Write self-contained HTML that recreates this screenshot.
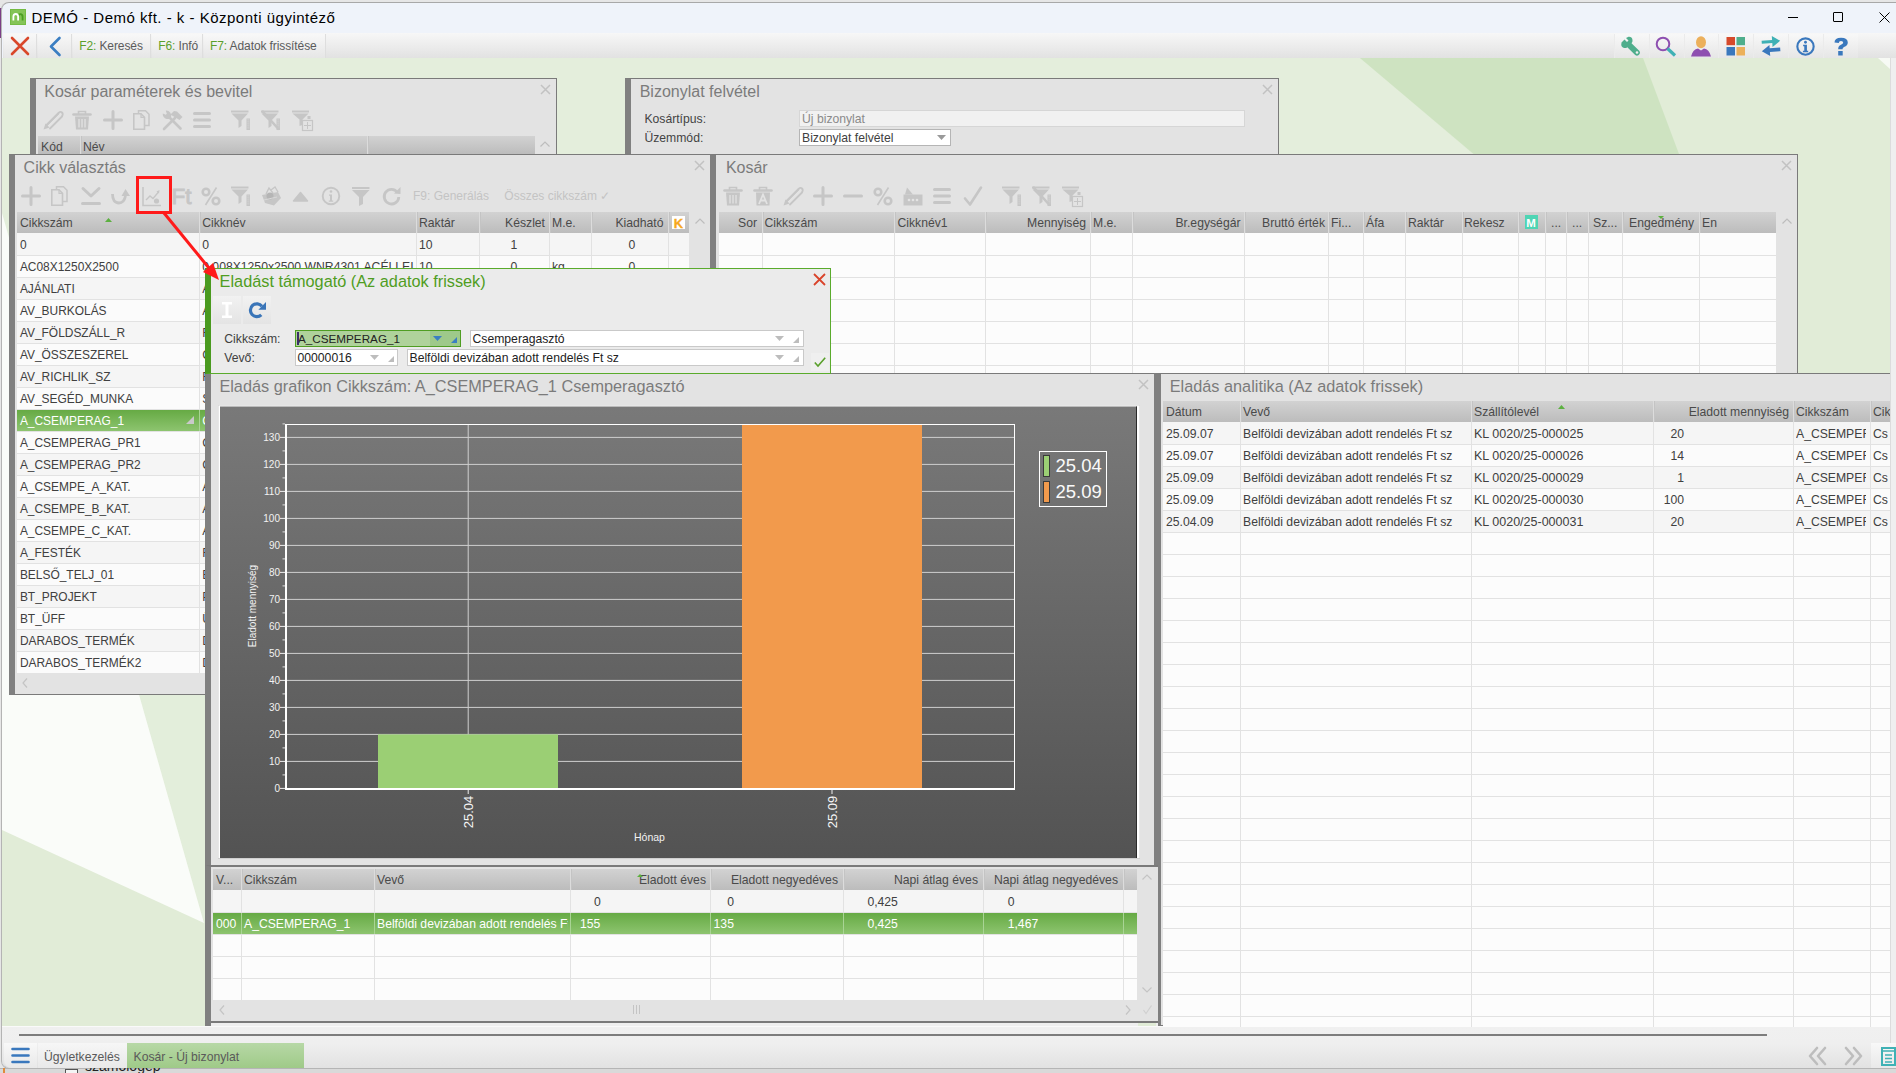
<!DOCTYPE html><html><head><meta charset='utf-8'><style>
*{margin:0;padding:0}
html,body{width:1896px;height:1073px;overflow:hidden;background:#c9c9c9;font-family:"Liberation Sans",sans-serif}
div{position:absolute;box-sizing:border-box}
.t{white-space:nowrap}
svg{position:absolute;overflow:visible}
</style></head><body><div style="left:0px;top:0px;width:1896px;height:1073px;background:#e6e6e6"></div>
<div style="left:0px;top:1068px;width:1896px;height:5px;background:#c3c3c3"></div>
<div style="left:0px;top:8px;width:2px;height:30px;background:#7b3f86"></div>
<div style="left:1px;top:2px;width:1895px;height:1067px;background:#eff3fa;border-top:1px solid #a8a8a8;border-left:1px solid #b4b4b4;border-bottom:1px solid #b0b0b0;border-radius:8px 0 0 8px"></div>
<div style="left:10px;top:9px;width:16px;height:16px;background:#84c458;border:0.5px solid #74bb44"></div>
<svg style="left:10px;top:9px" width="16" height="16"><path d="M8.1 7.8Q8.1 5.2 10.35 5.2Q12.6 5.2 12.6 7.8V11.5" fill="none" stroke="#4b9e22" stroke-width="1.8"/><path d="M3.4 11.5V7.6Q3.4 5 5.75 5Q8.1 5 8.1 7.6V11.5" fill="none" stroke="#fff" stroke-width="1.8"/></svg>
<div class="t" style="top:3px;font-size:15px;line-height:30px;color:#000;left:31.5px;letter-spacing:0.5px">DEMÓ - Demó kft. - k - Központi ügyintéző</div>
<div style="left:1788px;top:17px;width:10px;height:1px;background:#000"></div>
<div style="left:1833px;top:12px;width:10px;height:10px;border:1px solid #000;border-radius:1px"></div>
<svg style="left:1879px;top:12px" width="11" height="11"><path d="M0.5 0.5L10.5 10.5M10.5 0.5L0.5 10.5" stroke="#000" stroke-width="1"/></svg>
<div style="left:3px;top:33px;width:1893px;height:26px;background:linear-gradient(#f7f7f7,#e1e1e1)"></div>
<div style="left:4px;top:34px;width:33px;height:24px;background:linear-gradient(#f8f8f8,#e6e6e6);border-right:1px solid #dedede"></div>
<div style="left:38px;top:34px;width:34px;height:24px;background:linear-gradient(#f8f8f8,#e6e6e6);border-right:1px solid #dedede"></div>
<div style="left:73px;top:34px;width:78px;height:24px;background:linear-gradient(#f8f8f8,#e6e6e6);border-right:1px solid #dedede"></div>
<div style="left:152px;top:34px;width:51px;height:24px;background:linear-gradient(#f8f8f8,#e6e6e6);border-right:1px solid #dedede"></div>
<div style="left:204px;top:34px;width:122px;height:24px;background:linear-gradient(#f8f8f8,#e6e6e6);border-right:1px solid #dedede"></div>
<div style="left:1614px;top:34px;width:35px;height:24px;background:linear-gradient(#f8f8f8,#e6e6e6);border-left:1px solid #ebebeb"></div>
<div style="left:1649px;top:34px;width:35px;height:24px;background:linear-gradient(#f8f8f8,#e6e6e6);border-left:1px solid #ebebeb"></div>
<div style="left:1684px;top:34px;width:35px;height:24px;background:linear-gradient(#f8f8f8,#e6e6e6);border-left:1px solid #ebebeb"></div>
<div style="left:1718px;top:34px;width:35px;height:24px;background:linear-gradient(#f8f8f8,#e6e6e6);border-left:1px solid #ebebeb"></div>
<div style="left:1753px;top:34px;width:35px;height:24px;background:linear-gradient(#f8f8f8,#e6e6e6);border-left:1px solid #ebebeb"></div>
<div style="left:1788px;top:34px;width:35px;height:24px;background:linear-gradient(#f8f8f8,#e6e6e6);border-left:1px solid #ebebeb"></div>
<div style="left:1823px;top:34px;width:35px;height:24px;background:linear-gradient(#f8f8f8,#e6e6e6);border-left:1px solid #ebebeb"></div>
<svg style="left:10px;top:36px" width="20" height="20" viewBox="0 0 20 20"><path d="M2 2L18 18M18 2L2 18" stroke="#d9472b" stroke-width="2.6" stroke-linecap="round"/></svg>
<svg style="left:48px;top:36px" width="14" height="20" viewBox="0 0 14 20"><path d="M11.5 2L3 10.5L11.5 19" fill="none" stroke="#3a7ec2" stroke-width="2.6" stroke-linecap="round" stroke-linejoin="round"/></svg>
<div class="t" style="top:34px;font-size:12px;line-height:24px;color:#5b5b5b;left:79.2px;letter-spacing:-0.1px"><span style="color:#5aa02c">F2:</span> Keresés</div>
<div class="t" style="top:34px;font-size:12px;line-height:24px;color:#5b5b5b;left:158.2px;letter-spacing:-0.1px"><span style="color:#5aa02c">F6:</span> Infó</div>
<div class="t" style="top:34px;font-size:12px;line-height:24px;color:#5b5b5b;left:210px;letter-spacing:-0.1px"><span style="color:#5aa02c">F7:</span> Adatok frissítése</div>
<svg style="left:1620px;top:36px" width="21" height="20" viewBox="0 0 21 20"><path d="M1.5 6.5L4.5 3.5L7 6L8.5 4.5L6 2L8.5 0.8Q12 0.5 12.5 4Q12.8 6 11.5 7.2L19.5 15Q20.8 17 19 18.8Q17 20.5 15.2 19L7.3 11.2Q6 12.3 4 12Q0.5 11 1.5 6.5Z" fill="#4fae8c"/><circle cx="17" cy="16.5" r="1.3" fill="#f0f0f0"/></svg>
<svg style="left:1655px;top:36px" width="22" height="20" viewBox="0 0 22 20"><circle cx="8" cy="8" r="6.3" fill="none" stroke="#8e4fb0" stroke-width="2"/><path d="M12.5 12.5L20 19.5" stroke="#3fb1b5" stroke-width="3.2"/></svg>
<svg style="left:1690px;top:36px" width="22" height="21" viewBox="0 0 22 21"><ellipse cx="11" cy="6.2" rx="5" ry="6" fill="#ecb05b"/><path d="M1 20.5Q3 13 8 12.5L11 14.5L14 12.5Q19 13 21 20.5Z" fill="#8e4fb0"/></svg>
<svg style="left:1726px;top:36px" width="20" height="20" viewBox="0 0 20 20"><rect x="0.5" y="1" width="8.5" height="8.2" fill="#d64a2b"/><rect x="10.5" y="1" width="8.5" height="8.2" fill="#4fae8c"/><rect x="0.5" y="11" width="8.5" height="8.5" fill="#3a78bd"/><rect x="10.5" y="11" width="8.5" height="8.5" fill="#ecb05b"/></svg>
<svg style="left:1760px;top:35px" width="22" height="22" viewBox="0 0 22 22"><g transform="rotate(-4 11 11)"><path d="M2 5H12.5V1L20.5 6.5L12.5 12V8.2H2Z" fill="#3fb1b5"/><path d="M20 13.2H9.5V10L1.5 15.5L9.5 21V16.8H20Z" fill="#3a78bd"/></g></svg>
<svg style="left:1796px;top:37px" width="19" height="19" viewBox="0 0 20 20"><circle cx="10" cy="10" r="8.6" fill="none" stroke="#3a78bd" stroke-width="2.2"/><circle cx="10" cy="5.5" r="1.5" fill="#3a78bd"/><path d="M7.5 8.2H11.5V14.5H12.8V16H7.3V14.5H8.7V9.8H7.5Z" fill="#3a78bd"/></svg>
<svg style="left:1833px;top:37px" width="16" height="19" viewBox="0 0 16 19"><path d="M1.5 5.5Q1.5 0.8 8 0.8Q14.8 0.8 14.8 5.5Q14.8 8.5 11 10Q9.5 10.8 9.5 12.2H5.2Q5 9.3 8 7.8Q10.2 6.8 10.2 5.5Q10.2 4 8 4Q5.8 4 5.8 6Z" fill="#3a78bd"/><rect x="5.2" y="14" width="4.5" height="4.5" fill="#3a78bd"/></svg>
<svg style="left:2px;top:58px" width="1888" height="968" viewBox="2 58 1888 968">
<rect x="2" y="58" width="1888" height="968" fill="#e1ecd7"/>
<polygon points="2,58 1360,58 1480,160 1480,373 2,373" fill="#e4eedc"/>
<polygon points="1360,58 1643,58 1700,210 1540,210" fill="#cee3c1"/>
<polygon points="1878,58 1890,58 1890,69" fill="#f7faf5"/>
<polygon points="2,213 40,213 205,700 205,923 204,923" fill="#e3eedb"/>
<polygon points="2,213 204,923 2,830" fill="#fafcf9"/>
</svg>
<div style="left:1890px;top:58px;width:6px;height:1010px;background:#efefef;border-left:1px solid #dcdcdc"></div>
<div style="left:2px;top:1026px;width:1888px;height:43px;background:linear-gradient(#f0f0f0 0%,#efefef 40%,#e2e2e2 100%);border-top:1px solid #fafafa;border-bottom:1px solid #c6c6c6;border-radius:0 0 0 9px"></div>
<div style="left:1890px;top:1026px;width:6px;height:42px;background:#efefef"></div>
<div style="left:19px;top:1034px;width:1748px;height:2px;background:#7d7d7d"></div>
<div style="left:30px;top:78px;width:527px;height:80px;background:#e3e3e3;border:1px solid #7a7a7a;border-left:6px solid #808080"></div>
<div class="t" style="top:76px;font-size:16px;line-height:32px;color:#7b7b7b;left:44.3px;">Kosár paraméterek és bevitel</div>
<svg style="left:541px;top:85px" width="9" height="9"><path d="M0 0L9 9M9 0L0 9" stroke="#c2c2c2" stroke-width="1.5"/></svg>
<div style="left:38px;top:136px;width:497px;height:18px;background:linear-gradient(#d2d2d2,#bcbcbc)"></div>
<div style="left:80px;top:136px;width:1px;height:18px;background:#dcdcdc;border-right:1px solid #c4c4c4;width:2px"></div>
<div style="left:367px;top:136px;width:1px;height:18px;background:#dcdcdc;border-right:1px solid #c4c4c4;width:2px"></div>
<div class="t" style="top:134px;font-size:12.2px;line-height:26px;color:#4a4a4a;left:41px;">Kód</div>
<div class="t" style="top:134px;font-size:12.2px;line-height:26px;color:#4a4a4a;left:83px;">Név</div>
<svg style="left:540px;top:141px" width="10" height="6"><path d="M0.5 5.5L5 1L9.5 5.5" fill="none" stroke="#bdbdbd" stroke-width="1.2"/></svg>
<svg style="left:43px;top:110px" width="20" height="20" viewBox="0 0 20 20"><path d="M3.5 15L15.5 3M7 18.5L19 6.5" stroke="#c6c6c6" stroke-width="1.8" stroke-linecap="round"/><path d="M15.5 3Q17.5 1 19 2.5Q20.5 4 19 6.5" fill="none" stroke="#c6c6c6" stroke-width="1.8"/><path d="M0.5 19.5L2.5 13.5L6.5 17.5Z" fill="#c6c6c6"/><path d="M4 16L16 4" stroke="#c6c6c6" stroke-width="0.8"/></svg>
<svg style="left:72px;top:110px" width="20" height="20" viewBox="0 0 20 20"><path d="M1.5 4.5H18.5" stroke="#c6c6c6" stroke-width="2.6" stroke-linecap="round"/><path d="M6.5 4V1.5H13.5V4" fill="none" stroke="#c6c6c6" stroke-width="1.6"/><path d="M3 6.5H17L16 19.5H4Z" fill="#c6c6c6"/><path d="M7 9V17.5M10 9V17.5M13 9V17.5" stroke="#e3e3e3" stroke-width="1.3"/></svg>
<svg style="left:103px;top:110px" width="20" height="20" viewBox="0 0 20 20"><path d="M10 1.5V18.5M1.5 10H18.5" stroke="#c6c6c6" stroke-width="3" stroke-linecap="round"/></svg>
<svg style="left:133px;top:110px" width="20" height="20" viewBox="0 0 20 20"><path d="M5.5 3V0.8H12.5L16 4.3V15.5H11.5" fill="none" stroke="#c6c6c6" stroke-width="1.5"/><path d="M0.8 3.8H8L11.5 7.3V19.2H0.8Z" fill="none" stroke="#c6c6c6" stroke-width="1.6"/><path d="M8 3.8V7.3H11.5" fill="none" stroke="#c6c6c6" stroke-width="1.2"/></svg>
<svg style="left:162px;top:110px" width="20" height="20" viewBox="0 0 20 20"><path d="M6 6L18.5 18.5" stroke="#c6c6c6" stroke-width="2.6" stroke-linecap="round"/><path d="M0.8 3.5A5 5 0 0 0 7.5 8.8L9 7.2A5 5 0 0 0 3.8 0.6L4.8 3.8L3.8 4.8Z" fill="#c6c6c6"/><path d="M2 19L13 8" stroke="#c6c6c6" stroke-width="2.6" stroke-linecap="round"/><path d="M8.5 4.5L12 1L15 1.5L20.5 7L17.5 10Z" fill="#c6c6c6"/></svg>
<svg style="left:193px;top:110px" width="20" height="20" viewBox="0 0 20 20"><path d="M1.5 3.5H16.5M1.5 10H16.5M1.5 16.5H16.5" stroke="#c6c6c6" stroke-width="3" stroke-linecap="round"/></svg>
<svg style="left:231px;top:110px" width="20" height="20" viewBox="0 0 20 20"><path d="M0 0.5H17.5V2.5H0Z" fill="#c6c6c6"/><path d="M0.5 3.5H17L10.5 10.5V16L7.5 18V10.5Z" fill="#c6c6c6"/><rect x="15.5" y="8.5" width="3.5" height="11.5" fill="#c6c6c6"/><rect x="16.2" y="9.5" width="2.2" height="0.8" fill="#e3e3e3" opacity="0.6"/><rect x="16.2" y="11.5" width="2.2" height="0.8" fill="#e3e3e3" opacity="0.6"/><rect x="16.2" y="13.5" width="2.2" height="0.8" fill="#e3e3e3" opacity="0.6"/><rect x="16.2" y="15.5" width="2.2" height="0.8" fill="#e3e3e3" opacity="0.6"/><rect x="16.2" y="17.5" width="2.2" height="0.8" fill="#e3e3e3" opacity="0.6"/></svg>
<svg style="left:261px;top:110px" width="20" height="20" viewBox="0 0 20 20"><path d="M0 0.5H17.5V2.5H0Z" fill="#c6c6c6"/><path d="M0.5 3.5H17L10.5 10.5V16L7.5 18V10.5Z" fill="#c6c6c6"/><rect x="15.5" y="8.5" width="3.5" height="11.5" fill="#c6c6c6"/><rect x="16.2" y="9.5" width="2.2" height="0.8" fill="#e3e3e3" opacity="0.6"/><rect x="16.2" y="11.5" width="2.2" height="0.8" fill="#e3e3e3" opacity="0.6"/><rect x="16.2" y="13.5" width="2.2" height="0.8" fill="#e3e3e3" opacity="0.6"/><rect x="16.2" y="15.5" width="2.2" height="0.8" fill="#e3e3e3" opacity="0.6"/><rect x="16.2" y="17.5" width="2.2" height="0.8" fill="#e3e3e3" opacity="0.6"/><path d="M1 0.8L18 19.5" stroke="#c6c6c6" stroke-width="2.6"/></svg>
<svg style="left:292px;top:110px" width="20" height="20" viewBox="0 0 20 20"><path d="M0 0.5H17V2.5H0Z" fill="#c6c6c6"/><path d="M0.5 3.5H16.5L10.5 9.5V15L7.5 16V9.5Z" fill="#c6c6c6"/><rect x="10.5" y="10.5" width="10" height="10" fill="#e3e3e3" stroke="#c6c6c6" stroke-width="1.2"/><path d="M15.5 12V19M12 15.5H19" stroke="#c6c6c6" stroke-width="1"/><rect x="15.5" y="6" width="3" height="3" fill="#c6c6c6"/></svg>
<div style="left:625px;top:78px;width:654px;height:80px;background:#e3e3e3;border:1px solid #7a7a7a;border-left:6px solid #808080"></div>
<div class="t" style="top:76px;font-size:16px;line-height:32px;color:#7b7b7b;left:639.7px;">Bizonylat felvétel</div>
<svg style="left:1263px;top:85px" width="9" height="9"><path d="M0 0L9 9M9 0L0 9" stroke="#c2c2c2" stroke-width="1.5"/></svg>
<div class="t" style="top:106px;font-size:12.2px;line-height:26px;color:#444;left:644.4px;">Kosártípus:</div>
<div class="t" style="top:125px;font-size:12.2px;line-height:26px;color:#444;left:644.4px;">Üzemmód:</div>
<div style="left:799px;top:110px;width:446px;height:17px;background:#f1f1f1;border:1px solid #d6d6d6"></div>
<div class="t" style="top:106px;font-size:12.2px;line-height:26px;color:#8a8a8a;left:802px;">Új bizonylat</div>
<div style="left:799px;top:129px;width:152px;height:17px;background:#fff;border:1px solid #b5b5b5"></div>
<div class="t" style="top:125px;font-size:12.2px;line-height:26px;color:#404040;left:802px;">Bizonylat felvétel</div>
<svg style="left:937px;top:135px" width="9" height="5"><path d="M0 0H9L4.5 5Z" fill="#9a9a9a"/></svg>
<div style="left:9px;top:154px;width:702px;height:541px;background:#e3e3e3;border:1px solid #7a7a7a;border-left:6px solid #808080"></div>
<div class="t" style="top:152px;font-size:16px;line-height:32px;color:#7b7b7b;left:23.6px;">Cikk választás</div>
<svg style="left:695px;top:161px" width="9" height="9"><path d="M0 0L9 9M9 0L0 9" stroke="#c2c2c2" stroke-width="1.5"/></svg>
<div style="left:17px;top:212px;width:672px;height:21px;background:linear-gradient(#d2d2d2,#bcbcbc)"></div>
<div style="left:199px;top:212px;width:1px;height:21px;background:#dcdcdc;border-right:1px solid #c4c4c4;width:2px"></div>
<div style="left:416px;top:212px;width:1px;height:21px;background:#dcdcdc;border-right:1px solid #c4c4c4;width:2px"></div>
<div style="left:479px;top:212px;width:1px;height:21px;background:#dcdcdc;border-right:1px solid #c4c4c4;width:2px"></div>
<div style="left:549px;top:212px;width:1px;height:21px;background:#dcdcdc;border-right:1px solid #c4c4c4;width:2px"></div>
<div style="left:591px;top:212px;width:1px;height:21px;background:#dcdcdc;border-right:1px solid #c4c4c4;width:2px"></div>
<div style="left:668px;top:212px;width:1px;height:21px;background:#dcdcdc;border-right:1px solid #c4c4c4;width:2px"></div>
<div class="t" style="top:210px;font-size:12.2px;line-height:26px;color:#4a4a4a;left:19.9px;">Cikkszám</div>
<div class="t" style="top:210px;font-size:12.2px;line-height:26px;color:#4a4a4a;left:202.2px;">Cikknév</div>
<div class="t" style="top:210px;font-size:12.2px;line-height:26px;color:#4a4a4a;left:419px;">Raktár</div>
<div class="t" style="top:210px;font-size:12.2px;line-height:26px;color:#4a4a4a;right:1351px;">Készlet</div>
<div class="t" style="top:210px;font-size:12.2px;line-height:26px;color:#4a4a4a;left:552px;">M.e.</div>
<div class="t" style="top:210px;font-size:12.2px;line-height:26px;color:#4a4a4a;right:1232.5px;">Kiadható</div>
<svg style="left:105px;top:218px" width="7" height="4"><path d="M0 4L3.5 0L7 4Z" fill="#5cb040"/></svg>
<div style="left:672px;top:216px;width:13px;height:13px;background:#fff"></div>
<div class="t" style="top:211px;font-size:13px;line-height:26px;color:#f7a820;left:673.7px;font-weight:bold;-webkit-text-stroke:0.3px #f7a820">K</div>
<div style="left:17px;top:233px;width:672px;height:440px;background:#fcfcfc"></div>
<div style="left:17px;top:233px;width:672px;height:22px;background:#f5f5f5"></div>
<div style="left:17px;top:255px;width:672px;height:22px;background:#fbfbfb"></div>
<div style="left:17px;top:277px;width:672px;height:22px;background:#f5f5f5"></div>
<div style="left:17px;top:299px;width:672px;height:22px;background:#fbfbfb"></div>
<div style="left:17px;top:321px;width:672px;height:22px;background:#f5f5f5"></div>
<div style="left:17px;top:343px;width:672px;height:22px;background:#fbfbfb"></div>
<div style="left:17px;top:365px;width:672px;height:22px;background:#f5f5f5"></div>
<div style="left:17px;top:387px;width:672px;height:22px;background:#fbfbfb"></div>
<div style="left:17px;top:409px;width:672px;height:22px;background:#f5f5f5"></div>
<div style="left:17px;top:431px;width:672px;height:22px;background:#fbfbfb"></div>
<div style="left:17px;top:453px;width:672px;height:22px;background:#f5f5f5"></div>
<div style="left:17px;top:475px;width:672px;height:22px;background:#fbfbfb"></div>
<div style="left:17px;top:497px;width:672px;height:22px;background:#f5f5f5"></div>
<div style="left:17px;top:519px;width:672px;height:22px;background:#fbfbfb"></div>
<div style="left:17px;top:541px;width:672px;height:22px;background:#f5f5f5"></div>
<div style="left:17px;top:563px;width:672px;height:22px;background:#fbfbfb"></div>
<div style="left:17px;top:585px;width:672px;height:22px;background:#f5f5f5"></div>
<div style="left:17px;top:607px;width:672px;height:22px;background:#fbfbfb"></div>
<div style="left:17px;top:629px;width:672px;height:22px;background:#f5f5f5"></div>
<div style="left:17px;top:651px;width:672px;height:22px;background:#fbfbfb"></div>
<div style="left:17px;top:255px;width:672px;height:1px;background:#e2e2e2"></div>
<div style="left:17px;top:277px;width:672px;height:1px;background:#e2e2e2"></div>
<div style="left:17px;top:299px;width:672px;height:1px;background:#e2e2e2"></div>
<div style="left:17px;top:321px;width:672px;height:1px;background:#e2e2e2"></div>
<div style="left:17px;top:343px;width:672px;height:1px;background:#e2e2e2"></div>
<div style="left:17px;top:365px;width:672px;height:1px;background:#e2e2e2"></div>
<div style="left:17px;top:387px;width:672px;height:1px;background:#e2e2e2"></div>
<div style="left:17px;top:409px;width:672px;height:1px;background:#e2e2e2"></div>
<div style="left:17px;top:431px;width:672px;height:1px;background:#e2e2e2"></div>
<div style="left:17px;top:453px;width:672px;height:1px;background:#e2e2e2"></div>
<div style="left:17px;top:475px;width:672px;height:1px;background:#e2e2e2"></div>
<div style="left:17px;top:497px;width:672px;height:1px;background:#e2e2e2"></div>
<div style="left:17px;top:519px;width:672px;height:1px;background:#e2e2e2"></div>
<div style="left:17px;top:541px;width:672px;height:1px;background:#e2e2e2"></div>
<div style="left:17px;top:563px;width:672px;height:1px;background:#e2e2e2"></div>
<div style="left:17px;top:585px;width:672px;height:1px;background:#e2e2e2"></div>
<div style="left:17px;top:607px;width:672px;height:1px;background:#e2e2e2"></div>
<div style="left:17px;top:629px;width:672px;height:1px;background:#e2e2e2"></div>
<div style="left:17px;top:651px;width:672px;height:1px;background:#e2e2e2"></div>
<div style="left:17px;top:673px;width:672px;height:1px;background:#e2e2e2"></div>
<div style="left:199px;top:233px;width:1px;height:440px;background:#e2e2e2"></div>
<div style="left:416px;top:233px;width:1px;height:440px;background:#e2e2e2"></div>
<div style="left:479px;top:233px;width:1px;height:440px;background:#e2e2e2"></div>
<div style="left:549px;top:233px;width:1px;height:440px;background:#e2e2e2"></div>
<div style="left:591px;top:233px;width:1px;height:440px;background:#e2e2e2"></div>
<div style="left:668px;top:233px;width:1px;height:440px;background:#e2e2e2"></div>
<div style="left:17px;top:410px;width:672px;height:21px;background:linear-gradient(#66aa44,#8dc46f)"></div>
<div style="left:199px;top:410px;width:1px;height:21px;background:#a9d495"></div>
<div style="left:416px;top:410px;width:1px;height:21px;background:#a9d495"></div>
<div style="left:479px;top:410px;width:1px;height:21px;background:#a9d495"></div>
<div style="left:549px;top:410px;width:1px;height:21px;background:#a9d495"></div>
<div style="left:591px;top:410px;width:1px;height:21px;background:#a9d495"></div>
<div style="left:668px;top:410px;width:1px;height:21px;background:#a9d495"></div>
<div class="t" style="top:233px;font-size:11.95px;line-height:24px;color:#404040;left:19.9px;">0</div>
<div class="t" style="top:232px;font-size:12.2px;line-height:26px;color:#404040;left:202.2px;">0</div>
<div class="t" style="top:232px;font-size:12.2px;line-height:26px;color:#404040;left:419px;">10</div>
<div class="t" style="top:232px;font-size:12.2px;line-height:26px;color:#404040;left:14px;width:1000px;text-align:center;">1</div>
<div class="t" style="top:232px;font-size:12.2px;line-height:26px;color:#404040;left:552px;"></div>
<div class="t" style="top:232px;font-size:12.2px;line-height:26px;color:#404040;left:132px;width:1000px;text-align:center;">0</div>
<div class="t" style="top:255px;font-size:11.95px;line-height:24px;color:#404040;left:19.9px;">AC08X1250X2500</div>
<div class="t" style="top:254px;font-size:12.2px;line-height:26px;color:#404040;left:202.2px;">0.008X1250x2500 WNR4301 ACÉLLEI</div>
<div class="t" style="top:254px;font-size:12.2px;line-height:26px;color:#404040;left:419px;">10</div>
<div class="t" style="top:254px;font-size:12.2px;line-height:26px;color:#404040;left:14px;width:1000px;text-align:center;">0</div>
<div class="t" style="top:254px;font-size:12.2px;line-height:26px;color:#404040;left:552px;">kg</div>
<div class="t" style="top:254px;font-size:12.2px;line-height:26px;color:#404040;left:132px;width:1000px;text-align:center;">0</div>
<div class="t" style="top:277px;font-size:11.95px;line-height:24px;color:#404040;left:19.9px;">AJÁNLATI</div>
<div class="t" style="top:276px;font-size:12.2px;line-height:26px;color:#404040;left:202.2px;">Ajánlati</div>
<div class="t" style="top:299px;font-size:11.95px;line-height:24px;color:#404040;left:19.9px;">AV_BURKOLÁS</div>
<div class="t" style="top:298px;font-size:12.2px;line-height:26px;color:#404040;left:202.2px;">Alap</div>
<div class="t" style="top:321px;font-size:11.95px;line-height:24px;color:#404040;left:19.9px;">AV_FÖLDSZÁLL_R</div>
<div class="t" style="top:320px;font-size:12.2px;line-height:26px;color:#404040;left:202.2px;">Földszállítás</div>
<div class="t" style="top:343px;font-size:11.95px;line-height:24px;color:#404040;left:19.9px;">AV_ÖSSZESZEREL</div>
<div class="t" style="top:342px;font-size:12.2px;line-height:26px;color:#404040;left:202.2px;">Csere</div>
<div class="t" style="top:365px;font-size:11.95px;line-height:24px;color:#404040;left:19.9px;">AV_RICHLIK_SZ</div>
<div class="t" style="top:364px;font-size:12.2px;line-height:26px;color:#404040;left:202.2px;">Richlik</div>
<div class="t" style="top:387px;font-size:11.95px;line-height:24px;color:#404040;left:19.9px;">AV_SEGÉD_MUNKA</div>
<div class="t" style="top:386px;font-size:12.2px;line-height:26px;color:#404040;left:202.2px;">Segéd</div>
<div class="t" style="top:409px;font-size:11.95px;line-height:24px;color:#fff;left:19.9px;">A_CSEMPERAG_1</div>
<div class="t" style="top:408px;font-size:12.2px;line-height:26px;color:#fff;left:202.2px;">Csemperagasztó</div>
<div class="t" style="top:431px;font-size:11.95px;line-height:24px;color:#404040;left:19.9px;">A_CSEMPERAG_PR1</div>
<div class="t" style="top:430px;font-size:12.2px;line-height:26px;color:#404040;left:202.2px;">Csemperagasztó</div>
<div class="t" style="top:453px;font-size:11.95px;line-height:24px;color:#404040;left:19.9px;">A_CSEMPERAG_PR2</div>
<div class="t" style="top:452px;font-size:12.2px;line-height:26px;color:#404040;left:202.2px;">Csemperagasztó</div>
<div class="t" style="top:475px;font-size:11.95px;line-height:24px;color:#404040;left:19.9px;">A_CSEMPE_A_KAT.</div>
<div class="t" style="top:474px;font-size:12.2px;line-height:26px;color:#404040;left:202.2px;">A kat</div>
<div class="t" style="top:497px;font-size:11.95px;line-height:24px;color:#404040;left:19.9px;">A_CSEMPE_B_KAT.</div>
<div class="t" style="top:496px;font-size:12.2px;line-height:26px;color:#404040;left:202.2px;">A kat</div>
<div class="t" style="top:519px;font-size:11.95px;line-height:24px;color:#404040;left:19.9px;">A_CSEMPE_C_KAT.</div>
<div class="t" style="top:518px;font-size:12.2px;line-height:26px;color:#404040;left:202.2px;">A kat</div>
<div class="t" style="top:541px;font-size:11.95px;line-height:24px;color:#404040;left:19.9px;">A_FESTÉK</div>
<div class="t" style="top:540px;font-size:12.2px;line-height:26px;color:#404040;left:202.2px;">Festék</div>
<div class="t" style="top:563px;font-size:11.95px;line-height:24px;color:#404040;left:19.9px;">BELSŐ_TELJ_01</div>
<div class="t" style="top:562px;font-size:12.2px;line-height:26px;color:#404040;left:202.2px;">Belső</div>
<div class="t" style="top:585px;font-size:11.95px;line-height:24px;color:#404040;left:19.9px;">BT_PROJEKT</div>
<div class="t" style="top:584px;font-size:12.2px;line-height:26px;color:#404040;left:202.2px;">Projekt</div>
<div class="t" style="top:607px;font-size:11.95px;line-height:24px;color:#404040;left:19.9px;">BT_ÜFF</div>
<div class="t" style="top:606px;font-size:12.2px;line-height:26px;color:#404040;left:202.2px;">Üff</div>
<div class="t" style="top:629px;font-size:11.95px;line-height:24px;color:#404040;left:19.9px;">DARABOS_TERMÉK</div>
<div class="t" style="top:628px;font-size:12.2px;line-height:26px;color:#404040;left:202.2px;">Darabos</div>
<div class="t" style="top:651px;font-size:11.95px;line-height:24px;color:#404040;left:19.9px;">DARABOS_TERMÉK2</div>
<div class="t" style="top:650px;font-size:12.2px;line-height:26px;color:#404040;left:202.2px;">Darabos</div>
<svg style="left:186px;top:416px" width="8" height="8"><path d="M0 8L8 0V8Z" fill="#c9c9c9"/></svg>
<svg style="left:695px;top:218px" width="10" height="6"><path d="M0.5 5.5L5 1L9.5 5.5" fill="none" stroke="#bdbdbd" stroke-width="1.2"/></svg>
<div style="left:15px;top:673px;width:695px;height:21px;background:#e3e3e3"></div>
<svg style="left:22px;top:678px" width="6" height="10"><path d="M5 0.5L1 5L5 9.5" fill="none" stroke="#c4c4c4" stroke-width="1.2"/></svg>
<svg style="left:21px;top:186px" width="20" height="20" viewBox="0 0 20 20"><path d="M10 1.5V18.5M1.5 10H18.5" stroke="#c6c6c6" stroke-width="3" stroke-linecap="round"/></svg>
<svg style="left:51px;top:186px" width="20" height="20" viewBox="0 0 20 20"><path d="M5.5 3V0.8H12.5L16 4.3V15.5H11.5" fill="none" stroke="#c6c6c6" stroke-width="1.5"/><path d="M0.8 3.8H8L11.5 7.3V19.2H0.8Z" fill="none" stroke="#c6c6c6" stroke-width="1.6"/><path d="M8 3.8V7.3H11.5" fill="none" stroke="#c6c6c6" stroke-width="1.2"/></svg>
<svg style="left:81px;top:186px" width="20" height="20" viewBox="0 0 20 20"><path d="M2 2.5L10 10L18 2.5" fill="none" stroke="#c6c6c6" stroke-width="3" stroke-linecap="round" stroke-linejoin="round"/><path d="M1.5 17.5H18.5" stroke="#c6c6c6" stroke-width="3" stroke-linecap="round"/></svg>
<svg style="left:111px;top:186px" width="20" height="20" viewBox="0 0 20 20"><path d="M1.5 8Q1.5 17 8 17Q13 17 14.5 10" fill="none" stroke="#c6c6c6" stroke-width="2.8"/><path d="M10.5 10H19L14.5 3Z" fill="#c6c6c6"/></svg>
<svg style="left:142px;top:186px" width="20" height="20" viewBox="0 0 20 20"><path d="M1 1V19.5H19" fill="none" stroke="#c6c6c6" stroke-width="1.6"/><path d="M4 14L8 10L11 12.5L16.5 6" fill="none" stroke="#c6c6c6" stroke-width="1.3"/><path d="M14.5 5.5L17.5 4L17 7.5Z" fill="#c6c6c6"/><circle cx="14.5" cy="15" r="2.6" fill="#c6c6c6"/></svg>
<svg style="left:172px;top:186px" width="20" height="20" viewBox="0 0 20 20"><text x="-0.5" y="18" font-family="Liberation Sans" font-size="22" fill="#c6c6c6" stroke="#c6c6c6" stroke-width="0.9" textLength="20" lengthAdjust="spacingAndGlyphs">Ft</text></svg>
<svg style="left:201px;top:186px" width="20" height="20" viewBox="0 0 20 20"><circle cx="5" cy="6" r="3.3" fill="none" stroke="#c6c6c6" stroke-width="2.6"/><circle cx="15" cy="15" r="3.3" fill="none" stroke="#c6c6c6" stroke-width="2.6"/><path d="M15.5 1.5L4.5 19" stroke="#c6c6c6" stroke-width="1.6"/></svg>
<svg style="left:231px;top:186px" width="20" height="20" viewBox="0 0 20 20"><path d="M0 0.5H17.5V2.5H0Z" fill="#c6c6c6"/><path d="M0.5 3.5H17L10.5 10.5V16L7.5 18V10.5Z" fill="#c6c6c6"/><rect x="15.5" y="8.5" width="3.5" height="11.5" fill="#c6c6c6"/><rect x="16.2" y="9.5" width="2.2" height="0.8" fill="#e3e3e3" opacity="0.6"/><rect x="16.2" y="11.5" width="2.2" height="0.8" fill="#e3e3e3" opacity="0.6"/><rect x="16.2" y="13.5" width="2.2" height="0.8" fill="#e3e3e3" opacity="0.6"/><rect x="16.2" y="15.5" width="2.2" height="0.8" fill="#e3e3e3" opacity="0.6"/><rect x="16.2" y="17.5" width="2.2" height="0.8" fill="#e3e3e3" opacity="0.6"/></svg>
<svg style="left:261px;top:186px" width="20" height="20" viewBox="0 0 20 20"><path d="M1 9L17 6L20 12L13 19.5L4 17Z" fill="#c6c6c6"/><path d="M5 8L8 2L12 7M10 4L14 1L17 6" fill="none" stroke="#c6c6c6" stroke-width="1.4"/><circle cx="9" cy="10" r="3.5" fill="#b5b5b5"/><path d="M3 14L16 11" stroke="#d8d8d8" stroke-width="1"/></svg>
<svg style="left:292px;top:186px" width="20" height="20" viewBox="0 0 20 20"><path d="M1.5 15L8.5 6.5L15.5 15Z" fill="#c6c6c6" stroke="#c6c6c6" stroke-width="1.5" stroke-linejoin="round"/></svg>
<svg style="left:321px;top:186px" width="20" height="20" viewBox="0 0 20 20"><circle cx="10" cy="10" r="8.3" fill="none" stroke="#c6c6c6" stroke-width="1.9"/><circle cx="10" cy="5.5" r="1.3" fill="#c6c6c6"/><path d="M8 8.5H11V14.5H12.2V15.8H7.8V14.5H9V9.8H8Z" fill="#c6c6c6"/></svg>
<svg style="left:351px;top:186px" width="20" height="20" viewBox="0 0 20 20"><path d="M1 1H18.5V3H1Z" fill="#c6c6c6"/><path d="M1 4H18.5L12 11V18L8 20V11Z" fill="#c6c6c6"/></svg>
<svg style="left:382px;top:186px" width="20" height="20" viewBox="0 0 20 20"><path d="M15.5 6.5A7.3 7.3 0 1 0 16.8 11" fill="none" stroke="#c6c6c6" stroke-width="2.8"/><path d="M12 7.5L18.5 8L18.5 1Z" fill="#c6c6c6"/></svg>
<div class="t" style="top:184px;font-size:12px;line-height:24px;color:#c4c4c4;left:413px;">F9: Generálás</div>
<div class="t" style="top:184px;font-size:12px;line-height:24px;color:#c4c4c4;left:504.3px;">Összes cikkszám ✓</div>
<div style="left:710px;top:154px;width:1088px;height:220px;background:#e3e3e3;border:1px solid #7a7a7a;border-left:6px solid #808080"></div>
<div class="t" style="top:152px;font-size:16px;line-height:32px;color:#7b7b7b;left:725.9px;">Kosár</div>
<svg style="left:1782px;top:161px" width="9" height="9"><path d="M0 0L9 9M9 0L0 9" stroke="#c2c2c2" stroke-width="1.5"/></svg>
<div style="left:719px;top:233px;width:1057px;height:140px;background:#fcfcfc"></div>
<div style="left:719px;top:233px;width:1057px;height:22px;background:#fcfcfc"></div>
<div style="left:719px;top:255px;width:1057px;height:22px;background:#fcfcfc"></div>
<div style="left:719px;top:277px;width:1057px;height:22px;background:#fcfcfc"></div>
<div style="left:719px;top:299px;width:1057px;height:22px;background:#fcfcfc"></div>
<div style="left:719px;top:321px;width:1057px;height:22px;background:#fcfcfc"></div>
<div style="left:719px;top:343px;width:1057px;height:22px;background:#fcfcfc"></div>
<div style="left:719px;top:365px;width:1057px;height:8px;background:#fcfcfc"></div>
<div style="left:719px;top:255px;width:1057px;height:1px;background:#e2e2e2"></div>
<div style="left:719px;top:277px;width:1057px;height:1px;background:#e2e2e2"></div>
<div style="left:719px;top:299px;width:1057px;height:1px;background:#e2e2e2"></div>
<div style="left:719px;top:321px;width:1057px;height:1px;background:#e2e2e2"></div>
<div style="left:719px;top:343px;width:1057px;height:1px;background:#e2e2e2"></div>
<div style="left:719px;top:365px;width:1057px;height:1px;background:#e2e2e2"></div>
<div style="left:762px;top:233px;width:1px;height:140px;background:#e2e2e2"></div>
<div style="left:894px;top:233px;width:1px;height:140px;background:#e2e2e2"></div>
<div style="left:985px;top:233px;width:1px;height:140px;background:#e2e2e2"></div>
<div style="left:1090px;top:233px;width:1px;height:140px;background:#e2e2e2"></div>
<div style="left:1132px;top:233px;width:1px;height:140px;background:#e2e2e2"></div>
<div style="left:1244px;top:233px;width:1px;height:140px;background:#e2e2e2"></div>
<div style="left:1328px;top:233px;width:1px;height:140px;background:#e2e2e2"></div>
<div style="left:1363px;top:233px;width:1px;height:140px;background:#e2e2e2"></div>
<div style="left:1405px;top:233px;width:1px;height:140px;background:#e2e2e2"></div>
<div style="left:1462px;top:233px;width:1px;height:140px;background:#e2e2e2"></div>
<div style="left:1518px;top:233px;width:1px;height:140px;background:#e2e2e2"></div>
<div style="left:1545px;top:233px;width:1px;height:140px;background:#e2e2e2"></div>
<div style="left:1566px;top:233px;width:1px;height:140px;background:#e2e2e2"></div>
<div style="left:1588px;top:233px;width:1px;height:140px;background:#e2e2e2"></div>
<div style="left:1622px;top:233px;width:1px;height:140px;background:#e2e2e2"></div>
<div style="left:1699px;top:233px;width:1px;height:140px;background:#e2e2e2"></div>
<div style="left:719px;top:212px;width:1057px;height:21px;background:linear-gradient(#d2d2d2,#bcbcbc)"></div>
<div style="left:762px;top:212px;width:1px;height:21px;background:#dcdcdc;border-right:1px solid #c4c4c4;width:2px"></div>
<div style="left:894px;top:212px;width:1px;height:21px;background:#dcdcdc;border-right:1px solid #c4c4c4;width:2px"></div>
<div style="left:985px;top:212px;width:1px;height:21px;background:#dcdcdc;border-right:1px solid #c4c4c4;width:2px"></div>
<div style="left:1090px;top:212px;width:1px;height:21px;background:#dcdcdc;border-right:1px solid #c4c4c4;width:2px"></div>
<div style="left:1132px;top:212px;width:1px;height:21px;background:#dcdcdc;border-right:1px solid #c4c4c4;width:2px"></div>
<div style="left:1244px;top:212px;width:1px;height:21px;background:#dcdcdc;border-right:1px solid #c4c4c4;width:2px"></div>
<div style="left:1328px;top:212px;width:1px;height:21px;background:#dcdcdc;border-right:1px solid #c4c4c4;width:2px"></div>
<div style="left:1363px;top:212px;width:1px;height:21px;background:#dcdcdc;border-right:1px solid #c4c4c4;width:2px"></div>
<div style="left:1405px;top:212px;width:1px;height:21px;background:#dcdcdc;border-right:1px solid #c4c4c4;width:2px"></div>
<div style="left:1462px;top:212px;width:1px;height:21px;background:#dcdcdc;border-right:1px solid #c4c4c4;width:2px"></div>
<div style="left:1518px;top:212px;width:1px;height:21px;background:#dcdcdc;border-right:1px solid #c4c4c4;width:2px"></div>
<div style="left:1545px;top:212px;width:1px;height:21px;background:#dcdcdc;border-right:1px solid #c4c4c4;width:2px"></div>
<div style="left:1566px;top:212px;width:1px;height:21px;background:#dcdcdc;border-right:1px solid #c4c4c4;width:2px"></div>
<div style="left:1588px;top:212px;width:1px;height:21px;background:#dcdcdc;border-right:1px solid #c4c4c4;width:2px"></div>
<div style="left:1622px;top:212px;width:1px;height:21px;background:#dcdcdc;border-right:1px solid #c4c4c4;width:2px"></div>
<div style="left:1699px;top:212px;width:1px;height:21px;background:#dcdcdc;border-right:1px solid #c4c4c4;width:2px"></div>
<div class="t" style="top:210px;font-size:12.2px;line-height:26px;color:#4a4a4a;right:1139px;">Sor</div>
<div class="t" style="top:210px;font-size:12.2px;line-height:26px;color:#4a4a4a;left:764.5px;">Cikkszám</div>
<div class="t" style="top:210px;font-size:12.2px;line-height:26px;color:#4a4a4a;left:897.5px;">Cikknév1</div>
<div class="t" style="top:210px;font-size:12.2px;line-height:26px;color:#4a4a4a;right:810px;">Mennyiség</div>
<div class="t" style="top:210px;font-size:12.2px;line-height:26px;color:#4a4a4a;left:1093px;">M.e.</div>
<div class="t" style="top:210px;font-size:12.2px;line-height:26px;color:#4a4a4a;right:655.5px;">Br.egységár</div>
<div class="t" style="top:210px;font-size:12.2px;line-height:26px;color:#4a4a4a;right:571px;">Bruttó érték</div>
<div class="t" style="top:210px;font-size:12.2px;line-height:26px;color:#4a4a4a;left:1331px;">Fi...</div>
<div class="t" style="top:210px;font-size:12.2px;line-height:26px;color:#4a4a4a;left:1366px;">Áfa</div>
<div class="t" style="top:210px;font-size:12.2px;line-height:26px;color:#4a4a4a;left:1408px;">Raktár</div>
<div class="t" style="top:210px;font-size:12.2px;line-height:26px;color:#4a4a4a;left:1464px;">Rekesz</div>
<div class="t" style="top:210px;font-size:12.2px;line-height:26px;color:#4a4a4a;left:1551px;">...</div>
<div class="t" style="top:210px;font-size:12.2px;line-height:26px;color:#4a4a4a;left:1572px;">...</div>
<div class="t" style="top:210px;font-size:12.2px;line-height:26px;color:#4a4a4a;left:1593px;">Sz...</div>
<div class="t" style="top:210px;font-size:12.2px;line-height:26px;color:#4a4a4a;left:1629px;">Engedmény</div>
<div class="t" style="top:210px;font-size:12.2px;line-height:26px;color:#4a4a4a;left:1702px;">En</div>
<div style="left:1525px;top:215px;width:13px;height:14px;background:#4fd5b4"></div>
<div class="t" style="top:211px;font-size:11.5px;line-height:24px;color:#fff;left:1526.3px;font-weight:bold">M</div>
<svg style="left:1658px;top:216px" width="6" height="3"><path d="M0 0H6L3 3Z" fill="#5cb040"/></svg>
<svg style="left:1782px;top:218px" width="10" height="6"><path d="M0.5 5.5L5 1L9.5 5.5" fill="none" stroke="#bdbdbd" stroke-width="1.2"/></svg>
<svg style="left:723px;top:186px" width="20" height="20" viewBox="0 0 20 20"><path d="M1.5 4.5H18.5" stroke="#c6c6c6" stroke-width="2.6" stroke-linecap="round"/><path d="M6.5 4V1.5H13.5V4" fill="none" stroke="#c6c6c6" stroke-width="1.6"/><path d="M3 6.5H17L16 19.5H4Z" fill="#c6c6c6"/><path d="M7 9V17.5M10 9V17.5M13 9V17.5" stroke="#e3e3e3" stroke-width="1.3"/></svg>
<svg style="left:753px;top:186px" width="20" height="20" viewBox="0 0 20 20"><path d="M1.5 4.5H18.5" stroke="#c6c6c6" stroke-width="2.6" stroke-linecap="round"/><path d="M6.5 4V1.5H13.5V4" fill="none" stroke="#c6c6c6" stroke-width="1.6"/><path d="M3 6.5H17L16.5 19.5H3.5Z" fill="#c6c6c6"/><path d="M6 18L10 8.5L14 18M7.5 14.5H12.5" fill="none" stroke="#e3e3e3" stroke-width="1.8"/></svg>
<svg style="left:783px;top:186px" width="20" height="20" viewBox="0 0 20 20"><path d="M3.5 15L15.5 3M7 18.5L19 6.5" stroke="#c6c6c6" stroke-width="1.8" stroke-linecap="round"/><path d="M15.5 3Q17.5 1 19 2.5Q20.5 4 19 6.5" fill="none" stroke="#c6c6c6" stroke-width="1.8"/><path d="M0.5 19.5L2.5 13.5L6.5 17.5Z" fill="#c6c6c6"/><path d="M4 16L16 4" stroke="#c6c6c6" stroke-width="0.8"/></svg>
<svg style="left:813px;top:186px" width="20" height="20" viewBox="0 0 20 20"><path d="M10 1.5V18.5M1.5 10H18.5" stroke="#c6c6c6" stroke-width="3" stroke-linecap="round"/></svg>
<svg style="left:843px;top:186px" width="20" height="20" viewBox="0 0 20 20"><path d="M1.5 10H18.5" stroke="#c6c6c6" stroke-width="3" stroke-linecap="round"/></svg>
<svg style="left:873px;top:186px" width="20" height="20" viewBox="0 0 20 20"><circle cx="5" cy="6" r="3.3" fill="none" stroke="#c6c6c6" stroke-width="2.6"/><circle cx="15" cy="15" r="3.3" fill="none" stroke="#c6c6c6" stroke-width="2.6"/><path d="M15.5 1.5L4.5 19" stroke="#c6c6c6" stroke-width="1.6"/></svg>
<svg style="left:903px;top:186px" width="20" height="20" viewBox="0 0 20 20"><path d="M0.5 8.5H19.5V19.5H0.5Z" fill="#c6c6c6"/><path d="M2 8.5L4 1.5L10 8.5Z" fill="#c6c6c6"/><circle cx="6" cy="14" r="1.3" fill="#e3e3e3"/><circle cx="10" cy="14" r="1.3" fill="#e3e3e3"/><circle cx="14" cy="14" r="1.3" fill="#e3e3e3"/></svg>
<svg style="left:933px;top:186px" width="20" height="20" viewBox="0 0 20 20"><path d="M1.5 3.5H16.5M1.5 10H16.5M1.5 16.5H16.5" stroke="#c6c6c6" stroke-width="3" stroke-linecap="round"/></svg>
<svg style="left:963px;top:186px" width="20" height="20" viewBox="0 0 20 20"><path d="M2 12.5L7 18.5L18 1.5" fill="none" stroke="#c6c6c6" stroke-width="2.6" stroke-linecap="round" stroke-linejoin="round"/></svg>
<svg style="left:1002px;top:186px" width="20" height="20" viewBox="0 0 20 20"><path d="M0 0.5H17.5V2.5H0Z" fill="#c6c6c6"/><path d="M0.5 3.5H17L10.5 10.5V16L7.5 18V10.5Z" fill="#c6c6c6"/><rect x="15.5" y="8.5" width="3.5" height="11.5" fill="#c6c6c6"/><rect x="16.2" y="9.5" width="2.2" height="0.8" fill="#e3e3e3" opacity="0.6"/><rect x="16.2" y="11.5" width="2.2" height="0.8" fill="#e3e3e3" opacity="0.6"/><rect x="16.2" y="13.5" width="2.2" height="0.8" fill="#e3e3e3" opacity="0.6"/><rect x="16.2" y="15.5" width="2.2" height="0.8" fill="#e3e3e3" opacity="0.6"/><rect x="16.2" y="17.5" width="2.2" height="0.8" fill="#e3e3e3" opacity="0.6"/></svg>
<svg style="left:1032px;top:186px" width="20" height="20" viewBox="0 0 20 20"><path d="M0 0.5H17.5V2.5H0Z" fill="#c6c6c6"/><path d="M0.5 3.5H17L10.5 10.5V16L7.5 18V10.5Z" fill="#c6c6c6"/><rect x="15.5" y="8.5" width="3.5" height="11.5" fill="#c6c6c6"/><rect x="16.2" y="9.5" width="2.2" height="0.8" fill="#e3e3e3" opacity="0.6"/><rect x="16.2" y="11.5" width="2.2" height="0.8" fill="#e3e3e3" opacity="0.6"/><rect x="16.2" y="13.5" width="2.2" height="0.8" fill="#e3e3e3" opacity="0.6"/><rect x="16.2" y="15.5" width="2.2" height="0.8" fill="#e3e3e3" opacity="0.6"/><rect x="16.2" y="17.5" width="2.2" height="0.8" fill="#e3e3e3" opacity="0.6"/><path d="M1 0.8L18 19.5" stroke="#c6c6c6" stroke-width="2.6"/></svg>
<svg style="left:1062px;top:186px" width="20" height="20" viewBox="0 0 20 20"><path d="M0 0.5H17V2.5H0Z" fill="#c6c6c6"/><path d="M0.5 3.5H16.5L10.5 9.5V15L7.5 16V9.5Z" fill="#c6c6c6"/><rect x="10.5" y="10.5" width="10" height="10" fill="#e3e3e3" stroke="#c6c6c6" stroke-width="1.2"/><path d="M15.5 12V19M12 15.5H19" stroke="#c6c6c6" stroke-width="1"/><rect x="15.5" y="6" width="3" height="3" fill="#c6c6c6"/></svg>
<div style="left:205px;top:373px;width:956px;height:653px;background:#e3e3e3;border:1px solid #7a7a7a;border-left:6px solid #808080"></div>
<div class="t" style="top:369px;font-size:16.3px;line-height:34px;color:#7b7b7b;left:219.4px;">Eladás grafikon Cikkszám: A_CSEMPERAG_1 Csemperagasztó</div>
<svg style="left:1139px;top:380px" width="9" height="9"><path d="M0 0L9 9M9 0L0 9" stroke="#c2c2c2" stroke-width="1.5"/></svg>
<svg style="left:0;top:0" width="1896" height="1073" viewBox="0 0 1896 1073">
<defs><linearGradient id="cg" x1="0" y1="0" x2="0" y2="1"><stop offset="0" stop-color="#797979"/><stop offset="1" stop-color="#535353"/></linearGradient></defs>
<rect x="218" y="405" width="922" height="454" fill="#cfcfcf"/>
<rect x="218.5" y="405.5" width="921" height="452.5" fill="#ffffff"/>
<rect x="220" y="406.5" width="917" height="451.5" fill="url(#cg)"/>
<rect x="1136" y="406.5" width="1" height="451.5" fill="#2a2a2a"/>
<rect x="287" y="760.90" width="727" height="1" fill="#cfcfcf"/>
<rect x="287" y="733.90" width="727" height="1" fill="#cfcfcf"/>
<rect x="287" y="706.90" width="727" height="1" fill="#cfcfcf"/>
<rect x="287" y="679.90" width="727" height="1" fill="#cfcfcf"/>
<rect x="287" y="652.90" width="727" height="1" fill="#cfcfcf"/>
<rect x="287" y="625.90" width="727" height="1" fill="#cfcfcf"/>
<rect x="287" y="598.90" width="727" height="1" fill="#cfcfcf"/>
<rect x="287" y="571.90" width="727" height="1" fill="#cfcfcf"/>
<rect x="287" y="544.90" width="727" height="1" fill="#cfcfcf"/>
<rect x="287" y="517.90" width="727" height="1" fill="#cfcfcf"/>
<rect x="287" y="490.90" width="727" height="1" fill="#cfcfcf"/>
<rect x="287" y="463.90" width="727" height="1" fill="#cfcfcf"/>
<rect x="287" y="436.90" width="727" height="1" fill="#cfcfcf"/>
<rect x="467.7" y="424.5" width="1" height="364" fill="#cfcfcf"/>
<rect x="831.5" y="424.5" width="1" height="364" fill="#cfcfcf"/>
<rect x="378" y="734.40" width="180" height="54.00" fill="#9bcf74"/>
<rect x="742" y="424.5" width="180" height="363.90" fill="#f29a4c"/>
<rect x="285" y="424" width="730" height="1" fill="#fff"/>
<rect x="1014" y="424" width="1" height="365" fill="#fff"/>
<rect x="285" y="424" width="2" height="366" fill="#fff"/>
<rect x="285" y="788" width="730" height="2" fill="#fff"/>
<rect x="280" y="787.90" width="5" height="1" fill="#eee"/>
<rect x="280" y="760.90" width="5" height="1" fill="#eee"/>
<rect x="280" y="733.90" width="5" height="1" fill="#eee"/>
<rect x="280" y="706.90" width="5" height="1" fill="#eee"/>
<rect x="280" y="679.90" width="5" height="1" fill="#eee"/>
<rect x="280" y="652.90" width="5" height="1" fill="#eee"/>
<rect x="280" y="625.90" width="5" height="1" fill="#eee"/>
<rect x="280" y="598.90" width="5" height="1" fill="#eee"/>
<rect x="280" y="571.90" width="5" height="1" fill="#eee"/>
<rect x="280" y="544.90" width="5" height="1" fill="#eee"/>
<rect x="280" y="517.90" width="5" height="1" fill="#eee"/>
<rect x="280" y="490.90" width="5" height="1" fill="#eee"/>
<rect x="280" y="463.90" width="5" height="1" fill="#eee"/>
<rect x="280" y="436.90" width="5" height="1" fill="#eee"/>
<rect x="282.5" y="774.40" width="2.5" height="1" fill="#ddd"/>
<rect x="282.5" y="747.40" width="2.5" height="1" fill="#ddd"/>
<rect x="282.5" y="720.40" width="2.5" height="1" fill="#ddd"/>
<rect x="282.5" y="693.40" width="2.5" height="1" fill="#ddd"/>
<rect x="282.5" y="666.40" width="2.5" height="1" fill="#ddd"/>
<rect x="282.5" y="639.40" width="2.5" height="1" fill="#ddd"/>
<rect x="282.5" y="612.40" width="2.5" height="1" fill="#ddd"/>
<rect x="282.5" y="585.40" width="2.5" height="1" fill="#ddd"/>
<rect x="282.5" y="558.40" width="2.5" height="1" fill="#ddd"/>
<rect x="282.5" y="531.40" width="2.5" height="1" fill="#ddd"/>
<rect x="282.5" y="504.40" width="2.5" height="1" fill="#ddd"/>
<rect x="282.5" y="477.40" width="2.5" height="1" fill="#ddd"/>
<rect x="282.5" y="450.40" width="2.5" height="1" fill="#ddd"/>
<rect x="282.5" y="423.40" width="2.5" height="1" fill="#ddd"/>
<rect x="467.7" y="790" width="1" height="4" fill="#eee"/><rect x="831.5" y="790" width="1" height="4" fill="#eee"/>
<rect x="1039.5" y="451.5" width="67" height="55" fill="none" stroke="#fff" stroke-width="1"/>
<rect x="1043.5" y="455.5" width="6" height="21" fill="#9bcf74" stroke="#3a3a3a" stroke-width="1"/>
<rect x="1043.5" y="481.5" width="6" height="21" fill="#f29a4c" stroke="#3a3a3a" stroke-width="1"/>
</svg>
<div class="t" style="top:779px;font-size:10px;line-height:20px;color:#f2f2f2;right:1616px;">0</div>
<div class="t" style="top:752px;font-size:10px;line-height:20px;color:#f2f2f2;right:1616px;">10</div>
<div class="t" style="top:725px;font-size:10px;line-height:20px;color:#f2f2f2;right:1616px;">20</div>
<div class="t" style="top:698px;font-size:10px;line-height:20px;color:#f2f2f2;right:1616px;">30</div>
<div class="t" style="top:671px;font-size:10px;line-height:20px;color:#f2f2f2;right:1616px;">40</div>
<div class="t" style="top:644px;font-size:10px;line-height:20px;color:#f2f2f2;right:1616px;">50</div>
<div class="t" style="top:617px;font-size:10px;line-height:20px;color:#f2f2f2;right:1616px;">60</div>
<div class="t" style="top:590px;font-size:10px;line-height:20px;color:#f2f2f2;right:1616px;">70</div>
<div class="t" style="top:563px;font-size:10px;line-height:20px;color:#f2f2f2;right:1616px;">80</div>
<div class="t" style="top:536px;font-size:10px;line-height:20px;color:#f2f2f2;right:1616px;">90</div>
<div class="t" style="top:509px;font-size:10px;line-height:20px;color:#f2f2f2;right:1616px;">100</div>
<div class="t" style="top:482px;font-size:10px;line-height:20px;color:#f2f2f2;right:1616px;">110</div>
<div class="t" style="top:455px;font-size:10px;line-height:20px;color:#f2f2f2;right:1616px;">120</div>
<div class="t" style="top:428px;font-size:10px;line-height:20px;color:#f2f2f2;right:1616px;">130</div>
<div class="t" style="top:447px;font-size:18.5px;line-height:38px;color:#fafafa;left:1055.5px;">25.04</div>
<div class="t" style="top:473px;font-size:18.5px;line-height:38px;color:#fafafa;left:1055.5px;">25.09</div>
<div class="t" style="top:826px;font-size:10.5px;line-height:22px;color:#f2f2f2;left:149.5px;width:1000px;text-align:center;">Hónap</div>
<div class="t" style="left:468px;top:812px;font-size:13px;line-height:13px;color:#f5f5f5;transform:translate(-50%,-50%) rotate(-90deg);transform-origin:center">25.04</div>
<div class="t" style="left:832px;top:812px;font-size:13px;line-height:13px;color:#f5f5f5;transform:translate(-50%,-50%) rotate(-90deg);transform-origin:center">25.09</div>
<div class="t" style="left:252.5px;top:606px;font-size:10px;line-height:10px;color:#f2f2f2;transform:translate(-50%,-50%) rotate(-90deg);transform-origin:center">Eladott mennyiség</div>
<div style="left:1154px;top:373px;width:742px;height:653px;background:#e3e3e3;border:1px solid #7a7a7a;border-left:7px solid #808080"></div>
<div class="t" style="top:369px;font-size:16.3px;line-height:34px;color:#7b7b7b;left:1169.7px;">Eladás analitika (Az adatok frissek)</div>
<div style="left:1163px;top:422px;width:727px;height:605px;background:#fcfcfc"></div>
<div style="left:1163px;top:422px;width:727px;height:22px;background:#f5f5f5"></div>
<div style="left:1163px;top:444px;width:727px;height:22px;background:#fbfbfb"></div>
<div style="left:1163px;top:466px;width:727px;height:22px;background:#f5f5f5"></div>
<div style="left:1163px;top:488px;width:727px;height:22px;background:#fbfbfb"></div>
<div style="left:1163px;top:510px;width:727px;height:22px;background:#f5f5f5"></div>
<div style="left:1163px;top:444px;width:727px;height:1px;background:#e2e2e2"></div>
<div style="left:1163px;top:466px;width:727px;height:1px;background:#e2e2e2"></div>
<div style="left:1163px;top:488px;width:727px;height:1px;background:#e2e2e2"></div>
<div style="left:1163px;top:510px;width:727px;height:1px;background:#e2e2e2"></div>
<div style="left:1163px;top:532px;width:727px;height:1px;background:#e2e2e2"></div>
<div style="left:1163px;top:554px;width:727px;height:1px;background:#e2e2e2"></div>
<div style="left:1163px;top:576px;width:727px;height:1px;background:#e2e2e2"></div>
<div style="left:1163px;top:598px;width:727px;height:1px;background:#e2e2e2"></div>
<div style="left:1163px;top:620px;width:727px;height:1px;background:#e2e2e2"></div>
<div style="left:1163px;top:642px;width:727px;height:1px;background:#e2e2e2"></div>
<div style="left:1163px;top:664px;width:727px;height:1px;background:#e2e2e2"></div>
<div style="left:1163px;top:686px;width:727px;height:1px;background:#e2e2e2"></div>
<div style="left:1163px;top:708px;width:727px;height:1px;background:#e2e2e2"></div>
<div style="left:1163px;top:730px;width:727px;height:1px;background:#e2e2e2"></div>
<div style="left:1163px;top:752px;width:727px;height:1px;background:#e2e2e2"></div>
<div style="left:1163px;top:774px;width:727px;height:1px;background:#e2e2e2"></div>
<div style="left:1163px;top:796px;width:727px;height:1px;background:#e2e2e2"></div>
<div style="left:1163px;top:818px;width:727px;height:1px;background:#e2e2e2"></div>
<div style="left:1163px;top:840px;width:727px;height:1px;background:#e2e2e2"></div>
<div style="left:1163px;top:862px;width:727px;height:1px;background:#e2e2e2"></div>
<div style="left:1163px;top:884px;width:727px;height:1px;background:#e2e2e2"></div>
<div style="left:1163px;top:906px;width:727px;height:1px;background:#e2e2e2"></div>
<div style="left:1163px;top:928px;width:727px;height:1px;background:#e2e2e2"></div>
<div style="left:1163px;top:950px;width:727px;height:1px;background:#e2e2e2"></div>
<div style="left:1163px;top:972px;width:727px;height:1px;background:#e2e2e2"></div>
<div style="left:1163px;top:994px;width:727px;height:1px;background:#e2e2e2"></div>
<div style="left:1163px;top:1016px;width:727px;height:1px;background:#e2e2e2"></div>
<div style="left:1240px;top:422px;width:1px;height:605px;background:#e2e2e2"></div>
<div style="left:1471px;top:422px;width:1px;height:605px;background:#e2e2e2"></div>
<div style="left:1653px;top:422px;width:1px;height:605px;background:#e2e2e2"></div>
<div style="left:1793px;top:422px;width:1px;height:605px;background:#e2e2e2"></div>
<div style="left:1870px;top:422px;width:1px;height:605px;background:#e2e2e2"></div>
<div style="left:1163px;top:401px;width:727px;height:21px;background:linear-gradient(#d2d2d2,#bcbcbc)"></div>
<div style="left:1240px;top:401px;width:1px;height:21px;background:#dcdcdc;border-right:1px solid #c4c4c4;width:2px"></div>
<div style="left:1471px;top:401px;width:1px;height:21px;background:#dcdcdc;border-right:1px solid #c4c4c4;width:2px"></div>
<div style="left:1653px;top:401px;width:1px;height:21px;background:#dcdcdc;border-right:1px solid #c4c4c4;width:2px"></div>
<div style="left:1793px;top:401px;width:1px;height:21px;background:#dcdcdc;border-right:1px solid #c4c4c4;width:2px"></div>
<div style="left:1870px;top:401px;width:1px;height:21px;background:#dcdcdc;border-right:1px solid #c4c4c4;width:2px"></div>
<div class="t" style="top:399px;font-size:12.2px;line-height:26px;color:#4a4a4a;left:1166px;">Dátum</div>
<div class="t" style="top:399px;font-size:12.2px;line-height:26px;color:#4a4a4a;left:1243px;">Vevő</div>
<div class="t" style="top:399px;font-size:12.2px;line-height:26px;color:#4a4a4a;left:1474px;">Szállítólevél</div>
<div class="t" style="top:399px;font-size:12.2px;line-height:26px;color:#4a4a4a;right:107px;">Eladott mennyiség</div>
<div class="t" style="top:399px;font-size:12.2px;line-height:26px;color:#4a4a4a;left:1796px;">Cikkszám</div>
<div class="t" style="top:399px;font-size:12.2px;line-height:26px;color:#4a4a4a;left:1873px;">Cik</div>
<svg style="left:1558px;top:405px" width="7" height="4"><path d="M0 4L3.5 0L7 4Z" fill="#5cb040"/></svg>
<div class="t" style="top:421px;font-size:12.2px;line-height:26px;color:#404040;left:1166px;">25.09.07</div>
<div class="t" style="top:421px;font-size:12.2px;line-height:26px;color:#404040;left:1243px;">Belföldi devizában adott rendelés Ft sz</div>
<div class="t" style="top:421px;font-size:12.5px;line-height:26px;color:#404040;left:1474px;">KL 0020/25-000025</div>
<div class="t" style="top:421px;font-size:12.2px;line-height:26px;color:#404040;right:212px;">20</div>
<div class="t" style="top:421px;font-size:12.2px;line-height:26px;color:#404040;left:1796px;width:70px;overflow:hidden">A_CSEMPERAG_1</div>
<div class="t" style="top:421px;font-size:12.2px;line-height:26px;color:#404040;left:1873px;width:15px;overflow:hidden">Csemperagasztó</div>
<div class="t" style="top:443px;font-size:12.2px;line-height:26px;color:#404040;left:1166px;">25.09.07</div>
<div class="t" style="top:443px;font-size:12.2px;line-height:26px;color:#404040;left:1243px;">Belföldi devizában adott rendelés Ft sz</div>
<div class="t" style="top:443px;font-size:12.5px;line-height:26px;color:#404040;left:1474px;">KL 0020/25-000026</div>
<div class="t" style="top:443px;font-size:12.2px;line-height:26px;color:#404040;right:212px;">14</div>
<div class="t" style="top:443px;font-size:12.2px;line-height:26px;color:#404040;left:1796px;width:70px;overflow:hidden">A_CSEMPERAG_1</div>
<div class="t" style="top:443px;font-size:12.2px;line-height:26px;color:#404040;left:1873px;width:15px;overflow:hidden">Csemperagasztó</div>
<div class="t" style="top:465px;font-size:12.2px;line-height:26px;color:#404040;left:1166px;">25.09.09</div>
<div class="t" style="top:465px;font-size:12.2px;line-height:26px;color:#404040;left:1243px;">Belföldi devizában adott rendelés Ft sz</div>
<div class="t" style="top:465px;font-size:12.5px;line-height:26px;color:#404040;left:1474px;">KL 0020/25-000029</div>
<div class="t" style="top:465px;font-size:12.2px;line-height:26px;color:#404040;right:212px;">1</div>
<div class="t" style="top:465px;font-size:12.2px;line-height:26px;color:#404040;left:1796px;width:70px;overflow:hidden">A_CSEMPERAG_1</div>
<div class="t" style="top:465px;font-size:12.2px;line-height:26px;color:#404040;left:1873px;width:15px;overflow:hidden">Csemperagasztó</div>
<div class="t" style="top:487px;font-size:12.2px;line-height:26px;color:#404040;left:1166px;">25.09.09</div>
<div class="t" style="top:487px;font-size:12.2px;line-height:26px;color:#404040;left:1243px;">Belföldi devizában adott rendelés Ft sz</div>
<div class="t" style="top:487px;font-size:12.5px;line-height:26px;color:#404040;left:1474px;">KL 0020/25-000030</div>
<div class="t" style="top:487px;font-size:12.2px;line-height:26px;color:#404040;right:212px;">100</div>
<div class="t" style="top:487px;font-size:12.2px;line-height:26px;color:#404040;left:1796px;width:70px;overflow:hidden">A_CSEMPERAG_1</div>
<div class="t" style="top:487px;font-size:12.2px;line-height:26px;color:#404040;left:1873px;width:15px;overflow:hidden">Csemperagasztó</div>
<div class="t" style="top:509px;font-size:12.2px;line-height:26px;color:#404040;left:1166px;">25.04.09</div>
<div class="t" style="top:509px;font-size:12.2px;line-height:26px;color:#404040;left:1243px;">Belföldi devizában adott rendelés Ft sz</div>
<div class="t" style="top:509px;font-size:12.5px;line-height:26px;color:#404040;left:1474px;">KL 0020/25-000031</div>
<div class="t" style="top:509px;font-size:12.2px;line-height:26px;color:#404040;right:212px;">20</div>
<div class="t" style="top:509px;font-size:12.2px;line-height:26px;color:#404040;left:1796px;width:70px;overflow:hidden">A_CSEMPERAG_1</div>
<div class="t" style="top:509px;font-size:12.2px;line-height:26px;color:#404040;left:1873px;width:15px;overflow:hidden">Csemperagasztó</div>
<div style="left:205px;top:865px;width:953px;height:161px;background:#e3e3e3;border-top:2px solid #7a7a7a;border-left:6px solid #808080"></div>
<div style="left:213px;top:890px;width:924px;height:110px;background:#fcfcfc"></div>
<div style="left:213px;top:890px;width:924px;height:22px;background:#f5f5f5"></div>
<div style="left:213px;top:912px;width:924px;height:22px;background:#fcfcfc"></div>
<div style="left:213px;top:912px;width:924px;height:1px;background:#e2e2e2"></div>
<div style="left:213px;top:934px;width:924px;height:1px;background:#e2e2e2"></div>
<div style="left:213px;top:956px;width:924px;height:1px;background:#e2e2e2"></div>
<div style="left:213px;top:978px;width:924px;height:1px;background:#e2e2e2"></div>
<div style="left:213px;top:1000px;width:924px;height:1px;background:#e2e2e2"></div>
<div style="left:241px;top:890px;width:1px;height:110px;background:#e2e2e2"></div>
<div style="left:374px;top:890px;width:1px;height:110px;background:#e2e2e2"></div>
<div style="left:570px;top:890px;width:1px;height:110px;background:#e2e2e2"></div>
<div style="left:710px;top:890px;width:1px;height:110px;background:#e2e2e2"></div>
<div style="left:843px;top:890px;width:1px;height:110px;background:#e2e2e2"></div>
<div style="left:983px;top:890px;width:1px;height:110px;background:#e2e2e2"></div>
<div style="left:1123px;top:890px;width:1px;height:110px;background:#e2e2e2"></div>
<div style="left:213px;top:869px;width:924px;height:21px;background:linear-gradient(#d2d2d2,#bcbcbc)"></div>
<div style="left:241px;top:869px;width:1px;height:21px;background:#dcdcdc;border-right:1px solid #c4c4c4;width:2px"></div>
<div style="left:374px;top:869px;width:1px;height:21px;background:#dcdcdc;border-right:1px solid #c4c4c4;width:2px"></div>
<div style="left:570px;top:869px;width:1px;height:21px;background:#dcdcdc;border-right:1px solid #c4c4c4;width:2px"></div>
<div style="left:710px;top:869px;width:1px;height:21px;background:#dcdcdc;border-right:1px solid #c4c4c4;width:2px"></div>
<div style="left:843px;top:869px;width:1px;height:21px;background:#dcdcdc;border-right:1px solid #c4c4c4;width:2px"></div>
<div style="left:983px;top:869px;width:1px;height:21px;background:#dcdcdc;border-right:1px solid #c4c4c4;width:2px"></div>
<div style="left:1123px;top:869px;width:1px;height:21px;background:#dcdcdc;border-right:1px solid #c4c4c4;width:2px"></div>
<div class="t" style="top:867px;font-size:12.2px;line-height:26px;color:#4a4a4a;left:216px;">V...</div>
<div class="t" style="top:867px;font-size:12.2px;line-height:26px;color:#4a4a4a;left:244px;">Cikkszám</div>
<div class="t" style="top:867px;font-size:12.2px;line-height:26px;color:#4a4a4a;left:377px;">Vevő</div>
<div class="t" style="top:867px;font-size:12.2px;line-height:26px;color:#4a4a4a;right:1190px;">Eladott éves</div>
<div class="t" style="top:867px;font-size:12.2px;line-height:26px;color:#4a4a4a;right:1058px;">Eladott negyedéves</div>
<div class="t" style="top:867px;font-size:12.2px;line-height:26px;color:#4a4a4a;right:918px;">Napi átlag éves</div>
<div class="t" style="top:867px;font-size:12.2px;line-height:26px;color:#4a4a4a;right:778px;">Napi átlag negyedéves</div>
<svg style="left:637px;top:874px" width="6" height="3"><path d="M0 3L3 0L6 3Z" fill="#5cb040"/></svg>
<div style="left:213px;top:913px;width:924px;height:21px;background:linear-gradient(#66aa44,#8dc46f)"></div>
<div style="left:241px;top:913px;width:1px;height:21px;background:#a9d495"></div>
<div style="left:374px;top:913px;width:1px;height:21px;background:#a9d495"></div>
<div style="left:570px;top:913px;width:1px;height:21px;background:#a9d495"></div>
<div style="left:710px;top:913px;width:1px;height:21px;background:#a9d495"></div>
<div style="left:843px;top:913px;width:1px;height:21px;background:#a9d495"></div>
<div style="left:983px;top:913px;width:1px;height:21px;background:#a9d495"></div>
<div style="left:1123px;top:913px;width:1px;height:21px;background:#a9d495"></div>
<div class="t" style="top:889px;font-size:12.2px;line-height:26px;color:#404040;left:594px;">0</div>
<div class="t" style="top:889px;font-size:12.2px;line-height:26px;color:#404040;left:727.3px;">0</div>
<div class="t" style="top:889px;font-size:12.2px;line-height:26px;color:#404040;left:867.4px;">0,425</div>
<div class="t" style="top:889px;font-size:12.2px;line-height:26px;color:#404040;left:1007.7px;">0</div>
<div class="t" style="top:911px;font-size:12.2px;line-height:26px;color:#fff;left:216px;">000</div>
<div class="t" style="top:911px;font-size:12.2px;line-height:26px;color:#fff;left:244px;">A_CSEMPERAG_1</div>
<div class="t" style="top:911px;font-size:12.2px;line-height:26px;color:#fff;left:377px;width:191px;overflow:hidden">Belföldi devizában adott rendelés Ft sz</div>
<div class="t" style="top:911px;font-size:12.2px;line-height:26px;color:#fff;left:580px;">155</div>
<div class="t" style="top:911px;font-size:12.2px;line-height:26px;color:#fff;left:713.6px;">135</div>
<div class="t" style="top:911px;font-size:12.2px;line-height:26px;color:#fff;left:867.4px;">0,425</div>
<div class="t" style="top:911px;font-size:12.2px;line-height:26px;color:#fff;left:1007.7px;">1,467</div>
<div style="left:211px;top:1000px;width:945px;height:21px;background:#e3e3e3"></div>
<svg style="left:219px;top:1005px" width="6" height="10"><path d="M5 0.5L1 5L5 9.5" fill="none" stroke="#c4c4c4" stroke-width="1.2"/></svg>
<svg style="left:1125px;top:1005px" width="6" height="10"><path d="M1 0.5L5 5L1 9.5" fill="none" stroke="#c4c4c4" stroke-width="1.2"/></svg>
<div style="left:633px;top:1005px;width:1px;height:9px;background:#c4c4c4"></div>
<div style="left:636px;top:1005px;width:1px;height:9px;background:#c4c4c4"></div>
<div style="left:639px;top:1005px;width:1px;height:9px;background:#c4c4c4"></div>
<svg style="left:1142px;top:874px" width="10" height="6"><path d="M0.5 5.5L5 1L9.5 5.5" fill="none" stroke="#c4c4c4" stroke-width="1.2"/></svg>
<svg style="left:1142px;top:987px" width="10" height="6"><path d="M0.5 0.5L5 5L9.5 0.5" fill="none" stroke="#c4c4c4" stroke-width="1.2"/></svg>
<svg style="left:1143px;top:1005px" width="9" height="9"><path d="M0.5 5L3 8.5L8.5 0.5" fill="none" stroke="#d0d0d0" stroke-width="1.2"/></svg>
<div style="left:205px;top:1021px;width:953px;height:5px;background:#efefef;border-top:2px solid #7a7a7a"></div>
<div style="left:1138px;top:1023px;width:18px;height:3px;background:#e1ecd7"></div>
<div style="left:205px;top:1021px;width:6px;height:5px;background:#808080"></div>
<div style="left:205px;top:268px;width:626px;height:106px;background:#ebebeb;border:1px solid #5aab2c;border-left:6px solid #4a9a1f"></div>
<div class="t" style="top:264px;font-size:16.3px;line-height:34px;color:#4f9d22;left:219.6px;">Eladást támogató (Az adatok frissek)</div>
<svg style="left:814px;top:274px" width="11" height="11"><path d="M0 0L11 11M11 0L0 11" stroke="#d9442b" stroke-width="1.8"/></svg>
<div style="left:213px;top:296px;width:28px;height:28px;background:linear-gradient(#f2f2f2,#e4e4e4)"></div>
<div style="left:243px;top:296px;width:28px;height:28px;background:linear-gradient(#f2f2f2,#e4e4e4)"></div>
<svg style="left:222px;top:302px" width="10" height="16"><path d="M0 0H10V2.5H6.5V13.5H10V16H0V13.5H3.5V2.5H0Z" fill="#ffffff"/></svg>
<svg style="left:248px;top:300px" width="18" height="18" viewBox="0 0 18 18"><path d="M13.3 14.8A6.4 6.4 0 1 1 13.9 6.3" fill="none" stroke="#3a75b8" stroke-width="3.2"/><path d="M18 2V9.8H10.4Z" fill="#3a75b8"/></svg>
<div class="t" style="top:326px;font-size:12.2px;line-height:26px;color:#404040;left:224.3px;">Cikkszám:</div>
<div class="t" style="top:345px;font-size:12.2px;line-height:26px;color:#404040;left:224.3px;">Vevő:</div>
<div style="left:295px;top:330px;width:166px;height:17px;background:#afd29b;border:1px solid #4f9d22"></div>
<div style="left:430px;top:331px;width:30px;height:15px;background:#9ec98a"></div>
<div class="t" style="top:327px;font-size:11.7px;line-height:24px;color:#222;left:298px;">A_CSEMPERAG_1</div>
<div style="left:297px;top:332px;width:1.5px;height:13px;background:#3b2d66"></div>
<svg style="left:433px;top:336px" width="9" height="5"><path d="M0 0H9L4.5 5Z" fill="#3a7ec2"/></svg>
<svg style="left:451px;top:337px" width="6" height="6"><path d="M6 0V6H0Z" fill="#3a7ec2"/></svg>
<div style="left:470px;top:330px;width:334px;height:17px;background:#fff;border:1px solid #c9c9c9"></div>
<div class="t" style="top:326px;font-size:12.2px;line-height:26px;color:#222;left:472.5px;">Csemperagasztó</div>
<svg style="left:775px;top:336px" width="9" height="5"><path d="M0 0H9L4.5 5Z" fill="#bdbdbd"/></svg>
<svg style="left:793px;top:337px" width="6" height="6"><path d="M6 0V6H0Z" fill="#bdbdbd"/></svg>
<div style="left:295px;top:349px;width:103px;height:17px;background:#fff;border:1px solid #c9c9c9"></div>
<div class="t" style="top:345px;font-size:12.2px;line-height:26px;color:#222;left:297.5px;">00000016</div>
<svg style="left:370px;top:355px" width="9" height="5"><path d="M0 0H9L4.5 5Z" fill="#bdbdbd"/></svg>
<svg style="left:388px;top:356px" width="6" height="6"><path d="M6 0V6H0Z" fill="#bdbdbd"/></svg>
<div style="left:407px;top:349px;width:397px;height:17px;background:#fff;border:1px solid #c9c9c9"></div>
<div class="t" style="top:345px;font-size:12.2px;line-height:26px;color:#222;left:409.5px;">Belföldi devizában adott rendelés Ft sz</div>
<svg style="left:775px;top:355px" width="9" height="5"><path d="M0 0H9L4.5 5Z" fill="#bdbdbd"/></svg>
<svg style="left:793px;top:356px" width="6" height="6"><path d="M6 0V6H0Z" fill="#bdbdbd"/></svg>
<div style="left:811px;top:353px;width:18px;height:18px;background:#efefef"></div>
<svg style="left:814px;top:357px" width="12" height="10"><path d="M0.8 5.5L4 9L11.2 0.8" fill="none" stroke="#5aa02c" stroke-width="1.6"/></svg>
<div style="left:1890px;top:58px;width:6px;height:1010px;background:#efefef;border-left:1px solid #dcdcdc"></div>
<div style="left:4px;top:1043px;width:33px;height:25px;background:linear-gradient(#f8f8f8,#e9e9e9);border-radius:0 0 0 8px"></div>
<svg style="left:11px;top:1047px" width="19" height="17" viewBox="0 0 19 17"><path d="M1.5 2H17.5M1.5 8.5H17.5M1.5 15H17.5" stroke="#3a78bd" stroke-width="2.6" stroke-linecap="round"/></svg>
<div style="left:38px;top:1043px;width:89px;height:25px;background:linear-gradient(#f6f6f6,#e9e9e9)"></div>
<div class="t" style="top:1044px;font-size:12.2px;line-height:26px;color:#5a5a5a;left:44px;">Ügyletkezelés</div>
<div style="left:127px;top:1043px;width:177px;height:25px;background:linear-gradient(#b7d8a6,#9fca88)"></div>
<div class="t" style="top:1044px;font-size:12.2px;line-height:26px;color:#5a5a5a;left:133.5px;">Kosár - Új bizonylat</div>
<svg style="left:1808px;top:1046px" width="20" height="20" viewBox="0 0 20 20"><path d="M9 2L2 10L9 18M17 2L10 10L17 18" fill="none" stroke="#bdbdbd" stroke-width="2.6" stroke-linecap="round" stroke-linejoin="round"/></svg>
<svg style="left:1843px;top:1046px" width="20" height="20" viewBox="0 0 20 20"><path d="M3 2L10 10L3 18M11 2L18 10L11 18" fill="none" stroke="#bdbdbd" stroke-width="2.6" stroke-linecap="round" stroke-linejoin="round"/></svg>
<div style="left:1871px;top:1043px;width:25px;height:25px;background:linear-gradient(#f8f8f8,#e9e9e9)"></div>
<svg style="left:1881px;top:1047px" width="15" height="19" viewBox="0 0 15 19"><rect x="1" y="1" width="13" height="17" fill="none" stroke="#3fb1b5" stroke-width="2"/><path d="M1 4H14M4 8H11M4 11.5H11M4 15H11" stroke="#3fb1b5" stroke-width="1.6"/></svg>
<div style="left:0px;top:1068px;width:1896px;height:5px;background:#d9d9d9;border-top:1px solid #b5b5b5;overflow:hidden"></div>
<div style="left:3px;top:1068px;width:2px;height:5px;background:#e08a3c"></div>
<div style="left:65px;top:1069px;width:13px;height:6px;border:1px solid #555;background:#f4f4f4"></div>
<div style="left:0;top:1068px;width:1896px;height:5px;overflow:hidden"><div class="t" style="left:85px;top:-9px;font-size:14px;line-height:14px;color:#222">számológép</div></div>
<div style="left:136px;top:176px;width:36px;height:38px;border:3px solid #ff1a1a"></div>
<svg style="left:0;top:0" width="1896" height="1073" viewBox="0 0 1896 1073"><path d="M164 213L213 273" stroke="#ff1a1a" stroke-width="3"/><path d="M219 280L203 272L213 263Z" fill="#ff1a1a"/></svg></body></html>
